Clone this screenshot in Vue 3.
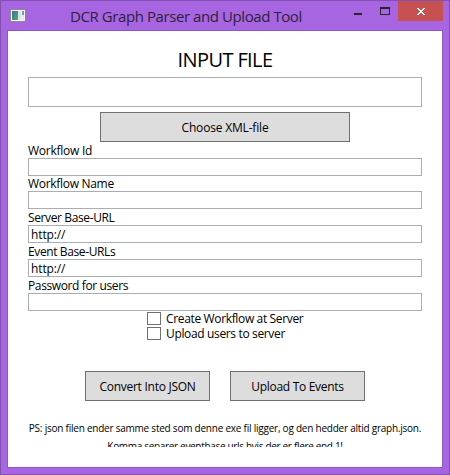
<script setup>
import { ref } from 'vue'

const fields = ref([
  { id: 'wfid', label: 'Workflow Id', value: '' },
  { id: 'wfname', label: 'Workflow Name', value: '' },
  { id: 'server', label: 'Server Base-URL', value: 'http://' },
  { id: 'event', label: 'Event Base-URLs', value: 'http://' },
  { id: 'password', label: 'Password for users', value: '' },
])
const file = ref('')
</script>

<template>
  <div class="window">
    <header class="titlebar">
      <svg class="app-icon" width="16" height="14" viewBox="0 0 16 14">
        <defs>
          <linearGradient id="pane" x1="0" y1="0" x2="1" y2="1">
            <stop offset="0" stop-color="#3d6fa0" />
            <stop offset="1" stop-color="#48ad72" />
          </linearGradient>
        </defs>
        <rect x="0.5" y="0.5" width="15" height="12" fill="#f5f5f2" stroke="#8c8790" />
        <rect x="2" y="2" width="6" height="9" fill="url(#pane)" />
        <rect x="8" y="2" width="3" height="9" fill="#dfe2e3" />
        <rect x="12" y="2" width="2" height="4" fill="#6c9fae" />
        <rect x="12" y="6" width="2" height="5" fill="#e4e7e4" />
      </svg>
      <h1 class="title">DCR Graph Parser and Upload Tool</h1>
      <div class="controls">
        <svg class="min" width="8" height="2"><rect width="8" height="2" fill="#262626" /></svg>
        <svg class="max" width="10" height="8" shape-rendering="crispEdges">
          <path d="M0 0H10V8H0Z M1 2V7H9V2Z" fill="#262626" fill-rule="evenodd" />
        </svg>
        <button class="close" aria-label="Close">
          <svg width="8" height="7" shape-rendering="crispEdges">
            <path d="M0 0H2V1H3V2H5V1H6V0H8V1H7V2H6V3H5V4H6V5H7V6H8V7H6V6H5V5H3V6H2V7H0V6H1V5H2V4H3V3H2V2H1V1H0Z" fill="#fff" />
          </svg>
        </button>
      </div>
    </header>
    <main class="client">
      <h2 class="heading">INPUT FILE</h2>
      <input v-model="file" class="file-box" aria-label="Input file" />
      <button class="btn choose">Choose XML-file</button>
      <div v-for="f in fields" :key="f.id" class="field" :class="f.id">
        <label :for="f.id">{{ f.label }}</label>
        <input :id="f.id" v-model="f.value" />
      </div>
      <div class="checks">
        <label class="check"><input type="checkbox" /><span>Create Workflow at Server</span></label>
        <label class="check"><input type="checkbox" /><span>Upload users to server</span></label>
      </div>
      <div class="actions">
        <button class="btn convert">Convert Into JSON</button>
        <button class="btn upload">Upload To Events</button>
      </div>
      <footer class="notes">
        <p class="note-one">PS: json filen ender samme sted som denne exe fil ligger, og den hedder altid graph.json.</p>
        <p class="note-two">Komma separer eventbase urls hvis der er flere end 1!</p>
      </footer>
    </main>
  </div>
</template>

<style>
body { margin: 0; }
</style>

<style scoped>
* { box-sizing: border-box; }
.window {
  width: 450px;
  height: 475px;
  padding: 0 6px 6px;
  border: 1px solid #8150b0;
  background: #a865e2;
  font: 12px/16px "Open Sans", "Noto Sans", sans-serif;
  color: #000;
  overflow: hidden;
}
.titlebar { display: flex; height: 29px; }
.app-icon { margin: 8px 0 0 3px; flex: none; }
.title {
  width: 240px;
  margin: 4px 0 0 44px;
  font-size: 15px;
  font-weight: 400;
  line-height: 22px;
  letter-spacing: -0.42px;
  color: #2b2338;
  white-space: nowrap;
}
.controls { display: flex; margin-left: auto; }
.min { margin: 12px 18px 0 0; }
.max { margin: 6px 8px 0 0; }
.close {
  display: flex;
  justify-content: center;
  align-items: flex-start;
  width: 45px;
  height: 20px;
  padding: 7px 0 0 1px;
  border: 0;
  background: #c75050;
}
.client {
  display: flex;
  flex-direction: column;
  width: 436px;
  height: 438px;
  padding: 0 20px;
  border: 1px solid #9057c4;
  background: #fff;
}
.heading {
  margin: 15px 0 3px;
  font-size: 20px;
  font-weight: 400;
  line-height: 28px;
  letter-spacing: -0.6px;
  text-align: center;
}
input {
  display: block;
  width: 100%;
  height: 18px;
  margin: 0;
  padding: 0 2px;
  border: 1px solid #abadb3;
  border-radius: 0;
  background: #fff;
  font: inherit;
  letter-spacing: -0.12px;
  color: #000;
}
input.file-box { height: 30px; flex: none; }
.btn {
  height: 30px;
  padding: 2px 0 0;
  border: 1px solid #707070;
  background: #ddd;
  font: inherit;
  color: #000;
  white-space: nowrap;
}
.choose { flex: none; width: 250px; margin: 5px auto 0; letter-spacing: -0.18px; }
.field { display: flex; flex-direction: column; justify-content: flex-end; height: 34px; flex: none; }
.field label { height: 15px; line-height: 16px; letter-spacing: -0.38px; }
.wfid label { letter-spacing: -0.25px; }
.wfname { height: 33px; }
.wfname label { letter-spacing: -0.3px; }
.checks { display: flex; flex-direction: column; gap: 2px; margin: 1px 0 0 119px; }
.check { display: flex; height: 13px; line-height: 13px; letter-spacing: -0.35px; white-space: nowrap; }
.check input {
  appearance: none;
  flex: none;
  width: 14px;
  height: 13px;
  margin-right: 5px;
  border-color: #707070;
}
.actions { display: flex; gap: 20px; margin: 31px 0 0 57px; }
.convert { width: 125px; letter-spacing: -0.26px; }
.upload { width: 135px; letter-spacing: -0.3px; }
.notes { height: 46px; overflow: hidden; font-size: 10px; text-align: center; white-space: nowrap; }
.notes p { margin: 0; line-height: 18px; }
.notes .note-one { margin-top: 18px; letter-spacing: -0.23px; }
.note-two { letter-spacing: -0.32px; }
</style>
